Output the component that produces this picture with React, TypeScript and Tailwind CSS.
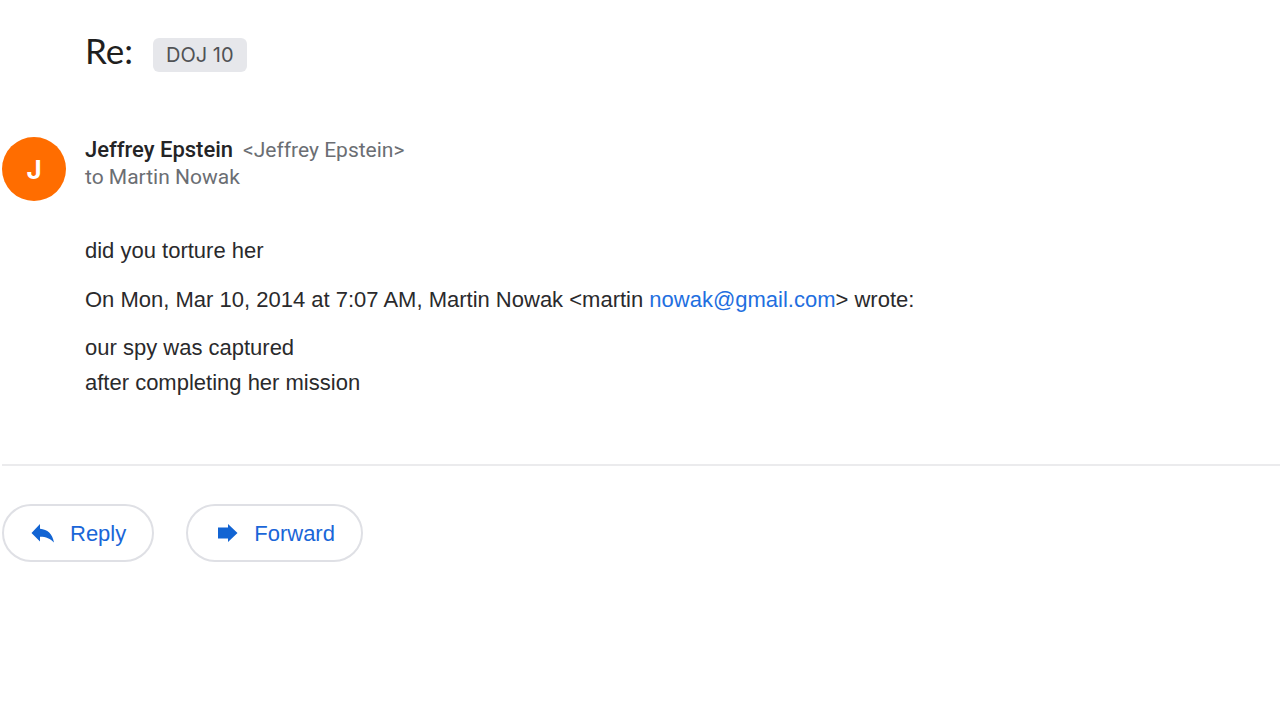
const QUOTED_LINES = ["our spy was captured", "after completing her mission"];

const ACTION_CLASS =
  "flex h-[58px] items-center gap-4 rounded-full border-2 border-[#dfe0e5] px-[26px] text-[22px] text-[#1a66d8]";

function ReplyIcon() {
  return (
    <svg viewBox="0 0 24 24" className="size-6" fill="#1264d3" aria-hidden="true">
      <path d="M10 3v4.800c7.500 .5 12.500 5.200 14 13.700-3.500-4-8-5.800-14-5.800V20.500L1.500 12z" />
    </svg>
  );
}

function ForwardIcon() {
  return (
    <svg viewBox="0 0 24 24" className="size-6" fill="#1264d3" aria-hidden="true">
      <path d="M4 6.500h10V3l9.500 9-9.500 9v-3.500H4z" />
    </svg>
  );
}

export default function App() {
  return (
    <main className="min-h-screen bg-white pl-0.5 font-['Liberation_Sans',Arial,sans-serif] text-[#2a2a2c]">
      {/* Subject */}
      <header className="flex items-start gap-5 pt-8 pl-[83px]">
        <h1 className="font-['Lato',sans-serif] text-[35px] leading-9 text-[#1f1f1f]">Re:</h1>
        <span className="mt-1.5 rounded-md bg-[#e6e7eb] px-[13px] py-1 font-['Inter',sans-serif] text-[20px] leading-[26px] text-[#505255]">
          DOJ 10
        </span>
      </header>

      <article>
        {/* Sender */}
        <div className="mt-16 flex items-start gap-[19px]">
          <div className="mt-px flex size-16 items-center justify-center rounded-full bg-[#ff6d00] font-['Inter',sans-serif] text-[26px] font-bold text-white">
            J
          </div>
          <div className="font-['Roboto',sans-serif] text-[21px] leading-[27px] text-[#6b6e73]">
            <div className="flex items-baseline gap-2.5">
              <span className="text-[22px] font-medium text-[#242426]">Jeffrey Epstein</span>
              <span>&lt;Jeffrey Epstein&gt;</span>
            </div>
            <div>to Martin Nowak</div>
          </div>
        </div>

        {/* Message */}
        <div className="mt-8 pl-[83px] text-[22px] leading-[35px]">
          <p>did you torture her</p>
          <p className="mt-3.5">
            On Mon, Mar 10, 2014 at 7:07 AM, Martin Nowak &lt;martin{" "}
            <a href="mailto:nowak@gmail.com" className="text-[#1f6fe0]">
              nowak@gmail.com
            </a>
            &gt; wrote:
          </p>
          <div className="mt-[13px]">
            {QUOTED_LINES.map((line) => (
              <p key={line}>{line}</p>
            ))}
          </div>
        </div>
      </article>

      <footer className="mt-16 flex gap-8 border-t-2 border-[#ebebed] pt-[38px]">
        <button type="button" className={ACTION_CLASS}>
          <ReplyIcon />
          Reply
        </button>
        <button type="button" className={ACTION_CLASS}>
          <ForwardIcon />
          Forward
        </button>
      </footer>
    </main>
  );
}
